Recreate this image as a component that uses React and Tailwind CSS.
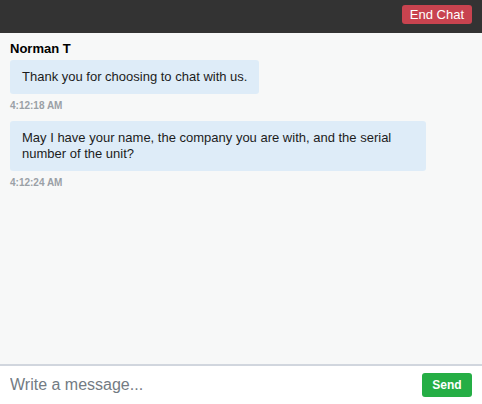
const messages = [
  { id: 1, text: 'Thank you for choosing to chat with us.', time: '4:12:18 AM' },
  {
    id: 2,
    text: 'May I have your name, the company you are with, and the serial number of the unit?',
    time: '4:12:24 AM',
  },
];

function ChatHeader() {
  return (
    <div className="h-[33px] shrink-0 bg-[#333333] flex justify-end items-start pt-[5px] pr-[10px]">
      <button className="h-[19px] px-[8px] rounded-[3px] bg-[#c8434f] text-white text-[13px] leading-[19px]">
        End Chat
      </button>
    </div>
  );
}

function Message({ text, time }) {
  return (
    <div className="mb-[8px]">
      <div className="max-w-[90%] w-fit rounded-[3px] bg-[#deecf8] px-[12px] py-[9px] text-[13px] leading-[16px] text-[#1c1c1c]">
        {text}
      </div>
      <div className="mt-[5px] text-[10px] leading-[14px] font-bold text-[#9aa0a6]">{time}</div>
    </div>
  );
}

export default function App() {
  return (
    <div
      className="w-[482px] h-[404px] flex flex-col bg-[#f7f8f8]"
      style={{ fontFamily: '"Liberation Sans", Arial, sans-serif' }}
    >
      <ChatHeader />

      <div className="flex-1 px-[10px] pt-[8px]">
        <div className="text-[13px] leading-[16px] font-bold text-black mb-[3px]">Norman T</div>
        {messages.map((m) => (
          <Message key={m.id} text={m.text} time={m.time} />
        ))}
      </div>

      <div className="h-[40px] shrink-0 border-t-2 border-[#d1d6de] bg-white flex items-center pl-[10px] pr-[10px]">
        <input
          type="text"
          placeholder="Write a message..."
          className="flex-1 bg-transparent outline-none text-[16px] text-[#333] placeholder:text-[#737b83]"
        />
        <button className="w-[50px] h-[24px] rounded-[3px] bg-[#25ae45] text-white text-[12px] font-bold">
          Send
        </button>
      </div>
    </div>
  );
}
